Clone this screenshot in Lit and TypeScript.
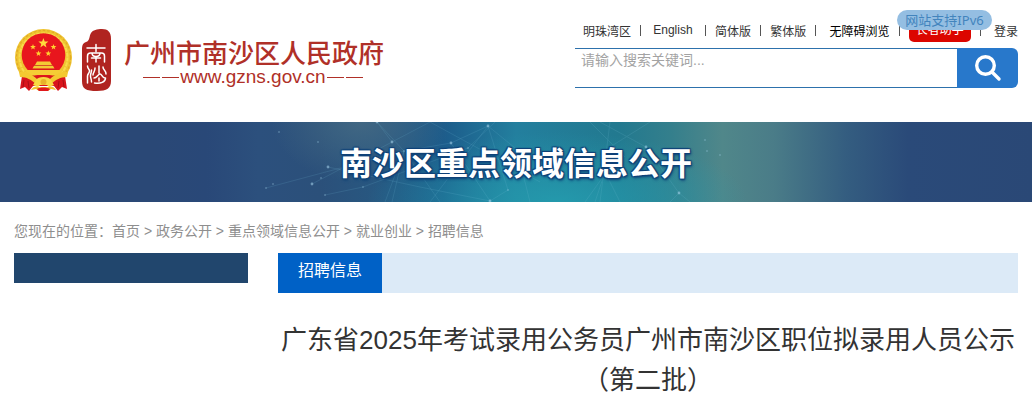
import { LitElement, html, svg, css } from "lit";
import { customElement } from "lit/decorators.js";

const STAR = "M0-5.2 1.3-1.7 5-1.6 2.1.7 3.1 4.2 0 2.1-3.1 4.2-2.1.7-5-1.6-1.3-1.7Z";

const SMALL_STARS = [
  [33, 47],
  [53.5, 47],
  [38.5, 53.5],
  [48.3, 53.5],
];

const DOTS = [
  [279, 10, 1], [318, 20, 1], [392, 20, 2], [404, 29, 1], [328, 45, 2], [321, 56, 1],
  [312, 62, 2], [325, 73, 1], [363, 65, 1], [266, 66, 1], [273, 62, 1], [451, 21, 2],
  [468, 26, 1], [488, 4, 2], [508, 68, 1], [490, 79, 2], [377, 0, 2], [646, 25, 2],
  [679, 71, 2], [705, 18, 1], [707, 29, 1], [720, 33, 1],
];

const TRAILS = ["首页", "政务公开", "重点领域信息公开", "就业创业", "招聘信息"];

@customElement("site-emblem")
export class SiteEmblem extends LitElement {
  static styles = css`
    :host { display: block; flex: none; }
    svg { display: block; }
  `;

  render() {
    return html`
      <svg width="60" height="64" viewBox="14 28 60 64" role="img" aria-label="国徽">
        <circle cx="43.5" cy="57.5" r="28.5" fill="#efc431" />
        <circle cx="43.5" cy="57.5" r="27" fill="none" stroke="#e0aa26" stroke-width="1.2" stroke-dasharray="2.5 2" />
        <circle cx="43.5" cy="57.5" r="24" fill="none" stroke="#f8dc4c" stroke-width="2" stroke-dasharray="4 1" />
        <circle cx="43.5" cy="55" r="21.8" fill="#e8161d" />
        <path transform="translate(43.4 43.2)" d=${STAR} fill="#ffdc3c" />
        ${SMALL_STARS.map(
          ([x, y]) => svg`<path transform="translate(${x} ${y}) scale(.58)" d=${STAR} fill="#ffd030" />`
        )}
        <path d="M37 61.5h13l2 3.5H35Z M34.5 65h18l2 3.5h-22Z" fill="#f3cb35" />
        <path d="M25 70h37l-3 5H28Z" fill="#f5cd35" />
        <path d="M33.5 65.5h20M30 69.3h27" stroke="#c9211c" stroke-width=".7" />
        <path d="M22 76c6-1 10 2 14 5h15c4-3 8-6 14-5l2 13-5-2-4 4-4-5H33l-4 5-4-4-5 2Z" fill="#d9151c" />
        <path d="M28 75.5h31l-3 3.5H31Z" fill="#d9151c" />
        <path d="M19 72c8-1 13 3 18 7h13c5-4 10-8 18-7l-1 5c-7 0-11 3-15 6H35c-4-3-8-6-15-6Z" fill="#f4c931" />
        <path d="M36 80c2-4 13-4 15 0l3 5-5 2-2-2h-7l-2 2-5-2Z" fill="#f8da42" />
        <circle cx="43.5" cy="82" r="3" fill="#e8b22a" />
        <path d="M31 90c2-4 6-4 8-3h9c2-1 6-1 8 3l-5-1-3 2h-9l-3-2Z" fill="#f2c530" />
        <path d="M37 89c3-2 10-2 13 0l-2 2h-9Z" fill="#e0181d" />
        <path d="m24 80-1 7m5-6 1 7m34-8 1 7m-5-6-1 7" stroke="#a90f16" stroke-width="1" />
      </svg>
    `;
  }
}

@customElement("site-seal")
export class SiteSeal extends LitElement {
  static styles = css`
    :host { display: block; flex: none; }
    svg { display: block; }
  `;

  render() {
    return html`
      <svg width="30" height="62" viewBox="81 29 30 62" role="img" aria-label="南沙">
        <path d="M91 33c2-3 6-4 11-4 6 0 9 3 9 10v42c0 7-4 10-14 10-11 0-15-2-15-10V50c0-5 1-7 4-8 4-1 3-6 5-9Z" fill="#b02420" />
        <g fill="none" stroke="#fff" stroke-width="1.5" stroke-linecap="round" stroke-linejoin="round">
          <path d="M87 48h18M96 44.5v7M87.500 62v-6c0-2 1-3 3-3h11c2 0 3 1 3 3v6M92 53c0 2.500 2 3.500 4 3.500s4-1 4-3.500M91.500 58h9M96 56.500v5.500" />
          <path d="M87.500 66c0 3 2 3 2 5s-2 3-2 5v7M91.500 70c0 3-1 3-1 6 0 2 1 3 1 6M99 66v7M95 68c0 4-2 4-2 7M103 67c0 3 3 3 3 7M94 78c3 0 4-4 6-4s2 4 5 4M105.500 78c0 4-5 6-11 5M99 78v3" />
        </g>
      </svg>
    `;
  }
}

@customElement("topic-banner")
export class TopicBanner extends LitElement {
  static styles = css`
    :host {
      display: grid;
      justify-items: center;
      height: 80px;
      overflow: hidden;
      background:
        radial-gradient(ellipse 90px 60px at 35% 0, #416783 0, transparent 100%),
        radial-gradient(ellipse 190px 70px at 54% 100%, #2499ac 0, transparent 100%),
        linear-gradient(90deg, #2a4876 0, #2a4876 15%, #294878 20%, #2c507d 25%, #2b507a 31%, #285780 36%, #1c5c8b 43%, #237f9e 50%, #22798f 60%, #347f8c 65%, #50878a 70%, #4a7c88 75%, #345d80 82%, #2a4a79 88%, #2a4876 100%);
    }
    svg, h2 { grid-area: 1 / 1; }
    .net { width: 1032px; height: 80px; }
    h2 {
      z-index: 1;
      margin: 0;
      padding-top: 18px;
      color: #fff;
      font-size: 32px;
      line-height: 48px;
      font-weight: 700;
      white-space: nowrap;
      text-shadow: 1px 1px 1px #0f4278, -1px -1px 1px #0f4278, 1px -1px 1px #0f4278, -1px 1px 1px #0f4278, 1px 2px 3px #0f4278;
    }
  `;

  render() {
    return html`
      <svg class="net" viewBox="0 0 1032 80" aria-hidden="true">
        <g fill="none" stroke="#7cc5dc" stroke-width="1" opacity=".15">
          <path d="M266 66 404 29 451 21 488 4 520 30M312 62 392 20 377 0M328 45 420 65 490 79M325 73 363 65 468 26 495 0M377 0 404 29 392 80M404 29 440 80M404 29 385 80M392 20 430 0 540 60M488 4 430 80M488 4 508 68 490 79M451 21 490 79" />
          <path d="M590 0 625 35M646 25 600 0M610 25 650 0M610 0 600 80M585 80 610 45M595 80 605 50M620 80 600 40M679 71 670 80M679 71 690 80M679 71 646 25M520 40 530 80" />
        </g>
        <g fill="#a7d3ec" opacity=".55">
          ${DOTS.map(([x, y, r]) => svg`<circle cx=${x} cy=${y} r=${r === 2 ? 1.4 : 0.8} />`)}
        </g>
      </svg>
      <h2>南沙区重点领域信息公开</h2>
    `;
  }
}

@customElement("app-root")
export class AppRoot extends LitElement {
  static styles = css`
    :host {
      display: block;
      background: #fff;
      color: #333;
      font-family: "Liberation Sans", "Noto Sans CJK SC", sans-serif;
    }
    * { box-sizing: border-box; }
    a { color: inherit; text-decoration: none; }
    .header {
      display: flex;
      justify-content: space-between;
      height: 122px;
      padding: 0 14px;
    }
    .brand { display: flex; align-items: flex-start; padding-top: 28px; }
    .seal { padding: 1px 0 0 7px; }
    .names { padding: 10px 0 0 13px; color: #b03028; }
    .names h1 { margin: 0; font-size: 26px; line-height: 32px; font-weight: 500; white-space: nowrap; }
    .domain {
      display: flex;
      align-items: center;
      gap: 1px;
      padding: 0 21px 0 19px;
      font-size: 19px;
      line-height: 14px;
    }
    .dash { display: flex; flex: 1; gap: 2px; }
    .dash::before, .dash::after { content: ""; flex: 1; border-top: 1px solid; }
    .tools { width: 443px; padding-top: 20px; }
    .links {
      display: flex;
      align-items: center;
      justify-content: space-between;
      height: 20px;
      padding-left: 8px;
      font-size: 12px;
      white-space: nowrap;
    }
    .bar { width: 1px; height: 11px; background: #555; }
    .links .strong { color: #000; padding-left: 4px; }
    .links .word { padding: 0 3px; }
    .links .login { padding-left: 4px; }
    .elder { position: relative; }
    .elder button {
      display: block;
      width: 62px;
      height: 24px;
      padding: 0;
      border: 0;
      border-radius: 5px;
      background: #dc0600;
      color: #fff;
      font: inherit;
      line-height: 24px;
    }
    .ipv6 {
      position: absolute;
      right: -21px;
      top: -8px;
      padding: 0 8px;
      border-radius: 10px;
      background: #94bee2;
      color: #4284bd;
      font-family: "Noto Sans", "Noto Sans CJK SC", sans-serif;
      font-size: 13px;
      line-height: 20px;
    }
    .search { display: flex; height: 40px; margin-top: 8px; }
    .search input {
      flex: 1;
      min-width: 0;
      padding: 0 6px 16px;
      border: solid #2d71ac;
      border-width: 1px 0;
      border-radius: 0;
      outline: 0;
      font: inherit;
      font-size: 14px;
    }
    .search input::placeholder { color: #a3a3a3; opacity: 1; }
    .search button {
      display: grid;
      place-items: center;
      width: 61px;
      padding: 0;
      border: 0;
      border-radius: 0 6px 6px 0;
      background: #2878cb;
    }
    .crumbs {
      padding: 19px 14px 0;
      color: #8e8e8e;
      font-size: 14px;
      line-height: 20px;
      white-space: pre-wrap;
    }
    .columns { display: flex; gap: 30px; padding: 12px 14px 0; }
    .side { flex: none; width: 234px; height: 30px; background: #21466d; }
    .main { flex: 1; min-width: 0; }
    .tabs { display: flex; height: 40px; background: #dceaf7; }
    .tabs a {
      padding: 0 20px;
      background: #0061c6;
      color: #fff;
      font-size: 16px;
      line-height: 36px;
    }
    .title {
      margin: 27px 0 0;
      font-size: 26px;
      line-height: 40px;
      font-weight: 400;
      text-align: center;
    }
  `;

  render() {
    const bar = html`<span class="bar" aria-hidden="true"></span>`;
    return html`
      <header class="header">
        <div class="brand">
          <site-emblem></site-emblem>
          <site-seal class="seal"></site-seal>
          <div class="names">
            <h1>广州市南沙区人民政府</h1>
            <div class="domain"><span class="dash"></span>www.gzns.gov.cn<span class="dash"></span></div>
          </div>
        </div>
        <div class="tools">
          <nav class="links">
            <a href="#">明珠湾区</a>${bar}<a class="word" href="#">English</a>${bar}<a href="#">简体版</a>${bar}<a href="#">繁体版</a>${bar}<a class="strong" href="#">无障碍浏览</a>${bar}
            <div class="elder"><button type="button">长者助手</button><span class="ipv6">网站支持IPv6</span></div>
            ${bar}<a class="login" href="#">登录</a>
          </nav>
          <form class="search" @submit=${(e: Event) => e.preventDefault()}>
            <input type="text" aria-label="搜索" placeholder="请输入搜索关键词..." />
            <button type="submit" aria-label="搜索">
              <svg width="28" height="28" viewBox="0 0 28 28" fill="none" stroke="#fff" stroke-width="3.400" stroke-linecap="round">
                <circle cx="11.500" cy="11.500" r="8.800" /><path d="m18 18 7 7" />
              </svg>
            </button>
          </form>
        </div>
      </header>
      <topic-banner></topic-banner>
      <nav class="crumbs">您现在的位置：${TRAILS.map((t, i) => html`${i ? " > " : ""}<a href="#">${t}</a>`)}</nav>
      <div class="columns">
        <aside class="side"></aside>
        <main class="main">
          <div class="tabs"><a href="#">招聘信息</a></div>
          <h1 class="title">广东省2025年考试录用公务员广州市南沙区职位拟录用人员公示（第二批）</h1>
        </main>
      </div>
    `;
  }
}
